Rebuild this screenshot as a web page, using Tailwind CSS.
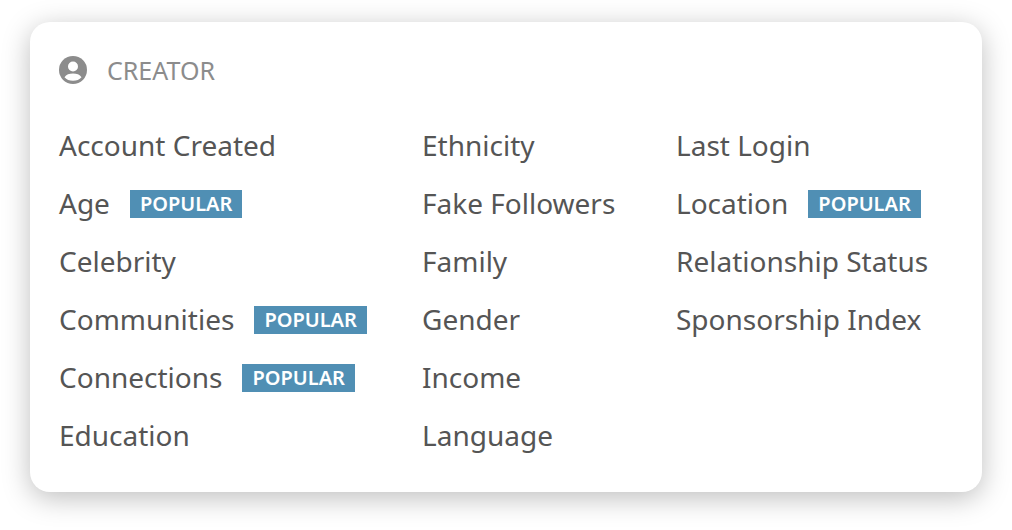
<!DOCTYPE html>
<html lang="en">
  <head>
    <meta charset="UTF-8" />
    <meta name="viewport" content="width=device-width, initial-scale=1.0" />
    <title>Creator Filters</title>
    <script src="https://cdn.jsdelivr.net/npm/@tailwindcss/browser@4"></script>
  </head>
  <body class="bg-white font-['Noto_Sans','Open_Sans',sans-serif] text-[#555555]">
    <main class="px-[30px] pt-[22px] pb-[38px]">
      <section class="rounded-[20px] bg-white px-[29px] pt-8 pb-7 shadow-[0_6px_28px_rgba(0,0,0,0.26)]">
        <!-- Header -->
        <header class="mb-[30px] flex h-8 items-center gap-5">
          <svg class="size-7" viewBox="0 0 28 28" aria-hidden="true">
            <circle cx="14" cy="14" r="14" fill="#8c8c8c" />
            <circle cx="14" cy="10.500" r="5" fill="#fff" />
            <path d="M5.500 21.200C7.200 18.600 10.300 17.500 14 17.500s6.800 1.100 8.500 3.700C20.500 23.500 17.500 24.800 14 24.800s-6.500-1.300-8.500-3.600z" fill="#fff" />
          </svg>
          <h2 class="pt-0.5 text-[25px] text-[#8c8c8c]">CREATOR</h2>
        </header>

        <!-- Filter links -->
        <nav class="grid grid-cols-[363fr_254fr_277fr] text-[28px] leading-[58px] whitespace-nowrap">
          <ul>
            <li><a href="#">Account Created</a></li>
            <li class="flex items-center gap-5">
              <a href="#">Age</a>
              <span class="mt-0.5 bg-[#508fb4] px-[10px] text-[20px] leading-7 font-semibold text-white">POPULAR</span>
            </li>
            <li><a href="#">Celebrity</a></li>
            <li class="flex items-center gap-5">
              <a href="#">Communities</a>
              <span class="mt-0.5 bg-[#508fb4] px-[10px] text-[20px] leading-7 font-semibold text-white">POPULAR</span>
            </li>
            <li class="flex items-center gap-5">
              <a href="#">Connections</a>
              <span class="mt-0.5 bg-[#508fb4] px-[10px] text-[20px] leading-7 font-semibold text-white">POPULAR</span>
            </li>
            <li><a href="#">Education</a></li>
          </ul>
          <ul>
            <li><a href="#">Ethnicity</a></li>
            <li><a href="#">Fake Followers</a></li>
            <li><a href="#">Family</a></li>
            <li><a href="#">Gender</a></li>
            <li><a href="#">Income</a></li>
            <li><a href="#">Language</a></li>
          </ul>
          <ul>
            <li><a href="#">Last Login</a></li>
            <li class="flex items-center gap-5">
              <a href="#">Location</a>
              <span class="mt-0.5 bg-[#508fb4] px-[10px] text-[20px] leading-7 font-semibold text-white">POPULAR</span>
            </li>
            <li><a href="#">Relationship Status</a></li>
            <li><a href="#">Sponsorship Index</a></li>
          </ul>
        </nav>
      </section>
    </main>
  </body>
</html>
